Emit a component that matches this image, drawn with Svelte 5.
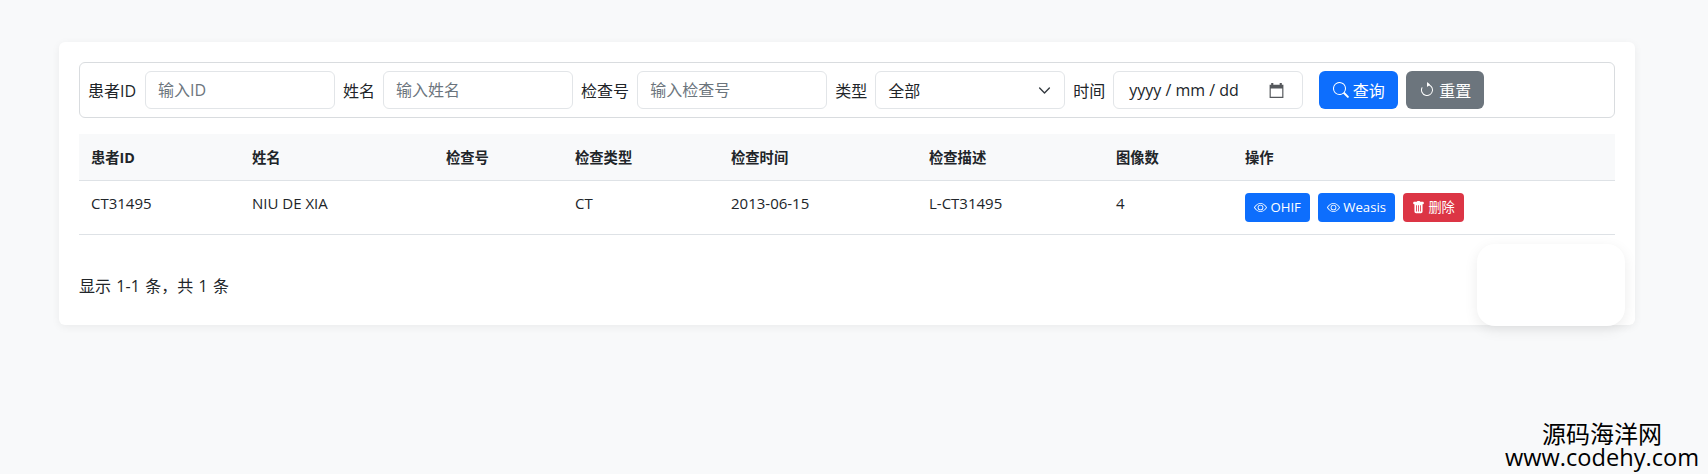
<script>
const columns = [
	{ label: '患者ID', width: 161 },
	{ label: '姓名', width: 194 },
	{ label: '检查号', width: 129 },
	{ label: '检查类型', width: 156 },
	{ label: '检查时间', width: 198 },
	{ label: '检查描述', width: 187 },
	{ label: '图像数', width: 129 },
	{ label: '操作', width: 382 }
];

const studies = [
	{ id: 'CT31495', name: 'NIU DE XIA', no: '', type: 'CT', time: '2013-06-15', desc: 'L-CT31495', count: 4 }
];
</script>

{#snippet eye()}
	<svg class="icon-sm" viewBox="0 0 16 16" fill="currentColor" aria-hidden="true">
		<path d="M16 8s-3-5.5-8-5.5S0 8 0 8s3 5.5 8 5.5S16 8 16 8M1.17 8a13 13 0 0 1 1.66-2.04C4.12 4.67 5.88 3.5 8 3.5s3.88 1.17 5.17 2.46A13 13 0 0 1 14.83 8c-.06.09-.13.2-.21.31-.35.5-.86 1.17-1.45 1.73C11.88 11.33 10.12 12.5 8 12.5s-3.88-1.17-5.17-2.46A13 13 0 0 1 1.17 8"/>
		<path d="M8 5.5a2.5 2.5 0 1 0 0 5 2.5 2.5 0 0 0 0-5M4.5 8a3.5 3.5 0 1 1 7 0 3.5 3.5 0 0 1-7 0"/>
	</svg>
{/snippet}

<div class="page">
	<div class="card">
		<form class="search-bar">
			<label class="first-label" for="pid">患者ID</label>
			<input id="pid" class="control" placeholder="输入ID" />
			<label for="pname">姓名</label>
			<input id="pname" class="control" placeholder="输入姓名" />
			<label for="sno">检查号</label>
			<input id="sno" class="control" placeholder="输入检查号" />
			<span class="label">类型</span>
			<div class="control fake">
				<span>全部</span>
				<svg class="chevron" viewBox="0 0 16 16" fill="none" stroke="#343a40" stroke-width="1.7" stroke-linecap="round" stroke-linejoin="round" aria-hidden="true">
					<path d="m2 5 6 6 6-6"/>
				</svg>
			</div>
			<span class="label">时间</span>
			<div class="control fake date">
				<span>yyyy / mm / dd</span>
				<svg class="calendar" viewBox="0 0 16 16" aria-hidden="true">
					<path fill="#55585c" d="M3 1h2v1.5h6V1h2v1.5h1.5V15h-13V2.5H3zM2.6 6v7.9h10.8V6z"/>
				</svg>
			</div>
			<button type="button" class="btn primary first">
				<svg class="icon" viewBox="0 0 16 16" fill="currentColor" aria-hidden="true">
					<path d="M11.74 10.34a6.5 6.5 0 1 0-1.4 1.4l3.85 3.85a1 1 0 0 0 1.41-1.41zM12 6.5a5.5 5.5 0 1 1-11 0 5.5 5.5 0 0 1 11 0"/>
				</svg>
				查询
			</button>
			<button type="button" class="btn secondary">
				<svg class="icon" viewBox="0 0 16 16" fill="currentColor" aria-hidden="true">
					<path fill-rule="evenodd" d="M8 3a5 5 0 1 1-4.55 2.92.5.5 0 1 0-.91-.42A6 6 0 1 0 8 2z"/>
					<path d="M8 4.47V.53a.25.25 0 0 1 .41-.19l2.36 1.97a.25.25 0 0 1 0 .38L8.41 4.66A.25.25 0 0 1 8 4.47"/>
				</svg>
				重置
			</button>
		</form>

		<table>
			<colgroup>
				{#each columns as col}
					<col style="width: {col.width}px" />
				{/each}
			</colgroup>
			<thead>
				<tr>
					{#each columns as col}
						<th>{col.label}</th>
					{/each}
				</tr>
			</thead>
			<tbody>
				{#each studies as s}
					<tr>
						<td>{s.id}</td>
						<td>{s.name}</td>
						<td>{s.no}</td>
						<td>{s.type}</td>
						<td>{s.time}</td>
						<td>{s.desc}</td>
						<td>{s.count}</td>
						<td class="actions">
							<button type="button" class="btn-sm primary">{@render eye()} OHIF</button>
							<button type="button" class="btn-sm primary">{@render eye()} Weasis</button>
							<button type="button" class="btn-sm danger">
								<svg class="icon-sm" viewBox="0 0 16 16" fill="currentColor" aria-hidden="true">
									<path d="M2.5 1a1 1 0 0 0-1 1v1a1 1 0 0 0 1 1H3v9a2 2 0 0 0 2 2h6a2 2 0 0 0 2-2V4h.5a1 1 0 0 0 1-1V2a1 1 0 0 0-1-1H10a1 1 0 0 0-1-1H7a1 1 0 0 0-1 1zm3 4a.5.5 0 0 1 .5.5v7a.5.5 0 0 1-1 0v-7a.5.5 0 0 1 .5-.5M8 5a.5.5 0 0 1 .5.5v7a.5.5 0 0 1-1 0v-7A.5.5 0 0 1 8 5m3 .5v7a.5.5 0 0 1-1 0v-7a.5.5 0 0 1 1 0"/>
								</svg>
								删除
							</button>
						</td>
					</tr>
				{/each}
			</tbody>
		</table>

		<div class="summary">显示 1-1 条，共 1 条</div>
		<div class="float-box"></div>
	</div>

	<div class="watermark">
		<div class="wm-cn">源码海洋网</div>
		<div class="wm-en">www.codehy.com</div>
	</div>
</div>

<style>
:global(body) {
	margin: 0;
	background: #f8f9fa;
}
.page {
	height: 474px;
	padding: 42px 73px 0 59px;
	box-sizing: border-box;
	position: relative;
	overflow: hidden;
	font-family: "Open Sans", "Noto Sans CJK SC", sans-serif;
	color: #212529;
}
.card {
	position: relative;
	height: 283px;
	box-sizing: border-box;
	padding: 20px;
	background: #fff;
	border-radius: 6px;
	box-shadow: 0 2px 8px rgba(0, 0, 0, 0.06);
}
.search-bar {
	display: flex;
	align-items: center;
	gap: 8px;
	height: 56px;
	box-sizing: border-box;
	padding: 0 8px;
	border: 1px solid #d9dcdf;
	border-radius: 6px;
}
label, .label {
	font-size: 16px;
	white-space: nowrap;
}
.first-label {
	margin-right: 1px;
}
.control {
	width: 190px;
	height: 38px;
	box-sizing: border-box;
	padding: 6px 12px;
	border: 1px solid #e2e5e8;
	border-radius: 6px;
	background: #fff;
	font: inherit;
	font-size: 16px;
	color: #212529;
}
.control::placeholder {
	color: #6c757d;
	opacity: 1;
}
.fake {
	display: flex;
	align-items: center;
	justify-content: space-between;
}
.date {
	padding-left: 15px;
	padding-right: 17px;
}
.chevron {
	width: 13px;
	height: 13px;
	margin-right: 1px;
}
.calendar {
	width: 17px;
	height: 17px;
}
.btn {
	display: inline-flex;
	align-items: center;
	justify-content: center;
	gap: 4px;
	height: 38px;
	padding: 0;
	border: 0;
	border-radius: 6px;
	color: #fff;
	font: inherit;
	font-size: 16px;
}
.btn.first {
	width: 79px;
	margin-left: 8px;
}
.btn.secondary {
	width: 78px;
}
.icon {
	width: 16px;
	height: 16px;
}
.icon-sm {
	width: 13px;
	height: 13px;
	vertical-align: -2px;
}
.primary {
	background: #0d6efd;
}
.secondary {
	background: #6c757d;
}
.danger {
	background: #dc3545;
}
table {
	width: 1536px;
	margin-top: 16px;
	border-collapse: collapse;
	table-layout: fixed;
	font-size: 15px;
}
th {
	height: 46px;
	padding: 0 12px;
	box-sizing: border-box;
	text-align: left;
	font-weight: 700;
	font-size: 14.3px;
	background: #f8f9fa;
	border-bottom: 1px solid #dee2e6;
}
td {
	height: 54px;
	padding: 11px 12px 0;
	box-sizing: border-box;
	vertical-align: top;
	line-height: 22px;
	border-bottom: 1px solid #dee2e6;
}
.actions {
	padding-top: 12px;
	white-space: nowrap;
}
.btn-sm {
	height: 29px;
	padding: 0 9px;
	margin-right: 4px;
	border: 0;
	border-radius: 4px;
	color: #fff;
	font: inherit;
	font-size: 13.2px;
}
.summary {
	margin-top: 39px;
	font-size: 16px;
	line-height: 24px;
	word-spacing: 1.2px;
}
.float-box {
	position: absolute;
	left: 1418px;
	top: 202px;
	width: 148px;
	height: 82px;
	background: #fff;
	border-radius: 18px;
	box-shadow: 0 4px 14px rgba(0, 0, 0, 0.08);
}
.watermark {
	position: absolute;
	right: 9px;
	bottom: 6px;
	color: #000;
	text-align: center;
}
.wm-cn {
	font-family: "Noto Sans CJK SC", sans-serif;
	font-size: 24px;
	line-height: 26px;
}
.wm-en {
	font-family: "Open Sans", sans-serif;
	font-size: 23.6px;
	line-height: 22px;
}
</style>
